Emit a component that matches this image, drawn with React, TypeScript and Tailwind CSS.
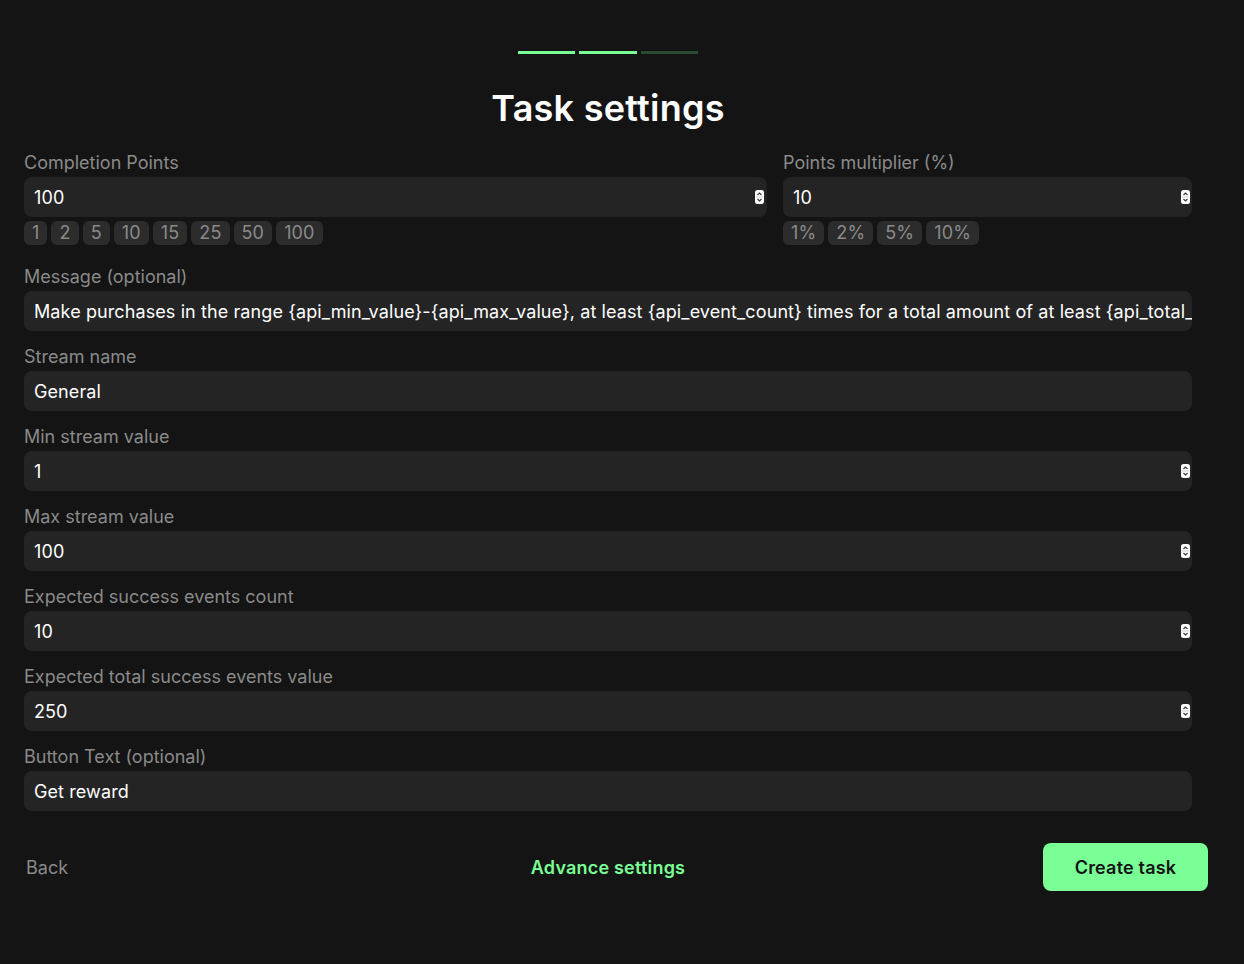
const inputClass =
  "block h-10 w-full rounded-lg bg-[#242424] pl-2.5 text-lg tracking-[0.1px] text-white outline-none [appearance:textfield] [&::-webkit-inner-spin-button]:appearance-none [&::-webkit-outer-spin-button]:appearance-none"

const message =
  "Make purchases in the range {api_min_value}-{api_max_value}, at least {api_event_count} times for a total amount of at least {api_total_value} to complete this task"

function Presets({ items }: { items: string[] }) {
  return (
    <div className="mt-1 flex gap-1">
      {items.map((item) => (
        <button
          key={item}
          className="flex h-6 items-center rounded-md bg-[#2c2c2c] px-2 text-lg leading-none tracking-[0.15px] text-[#8a8a8a]"
        >
          {item}
        </button>
      ))}
    </div>
  )
}

function Spinner({ className }: { className: string }) {
  return (
    <svg width="9" height="14" viewBox="0 0 9 14" className={className}>
      <rect width="9" height="14" rx="2.5" fill="#fff" />
      <path d="M2.5 5 4.5 3l2 2" fill="none" stroke="#3a3a3a" strokeWidth="1.2" />
      <path d="M2.5 9l2 2 2-2" fill="none" stroke="#3a3a3a" strokeWidth="1.2" />
      <path d="M1 7h7" stroke="#d0d0d0" strokeWidth="1" />
    </svg>
  )
}

function Field({
  label,
  value,
  type = "text",
  spinnerClass = "right-[2px]",
}: {
  label: string
  value: string
  type?: string
  spinnerClass?: string
}) {
  return (
    <label className="block">
      <span className="block h-[26px] text-lg leading-6 text-[#8a8a8a]">{label}</span>
      <span className="relative block">
        <input type={type} defaultValue={value} className={inputClass} />
        {type === "number" && (
          <Spinner className={`pointer-events-none absolute top-[13px] ${spinnerClass}`} />
        )}
      </span>
    </label>
  )
}

export default function App() {
  return (
    <div className="min-h-[964px] bg-[#141414] font-['Inter',sans-serif]">
      <div className="w-[1216px]">
        <div className="flex justify-center gap-1 pt-[51px]">
          <div className="h-[3px] w-[57px] bg-[#7aff96]" />
          <div className="h-[3px] w-[58px] bg-[#7aff96]" />
          <div className="h-[3px] w-[57px] bg-[#2a4a31]" />
        </div>

        <h1 className="mt-8 text-center text-4xl leading-[44px] font-semibold tracking-[0.25px] text-white">
          Task settings
        </h1>

        <div className="mt-[21px] ml-6 w-[1168px]">
          <div className="grid grid-cols-[743px_409px] gap-4">
            <div>
              <Field label="Completion Points" value="100" type="number" spinnerClass="right-[3px]" />
              <Presets items={["1", "2", "5", "10", "15", "25", "50", "100"]} />
            </div>
            <div>
              <Field label="Points multiplier (%)" value="10" type="number" />
              <Presets items={["1%", "2%", "5%", "10%"]} />
            </div>
          </div>

          <div className="mt-5 flex flex-col gap-[14px]">
            <Field label="Message (optional)" value={message} />
            <Field label="Stream name" value="General" />
            <Field label="Min stream value" value="1" type="number" />
            <Field label="Max stream value" value="100" type="number" />
            <Field label="Expected success events count" value="10" type="number" />
            <Field label="Expected total success events value" value="250" type="number" />
            <Field label="Button Text (optional)" value="Get reward" />
          </div>
        </div>

        <div className="mt-8 grid grid-cols-[1fr_auto_1fr] items-center px-2">
          <button className="ml-[18px] h-12 justify-self-start pt-px text-lg text-[#8a8a8a]">Back</button>
          <button className="h-12 pt-px text-lg font-semibold tracking-[0.2px] text-[#7aff96]">Advance settings</button>
          <button className="h-12 w-[165px] justify-self-end rounded-lg bg-[#7aff96] pt-px text-lg font-semibold tracking-[0.2px] text-[#141414]">
            Create task
          </button>
        </div>
      </div>
    </div>
  )
}
